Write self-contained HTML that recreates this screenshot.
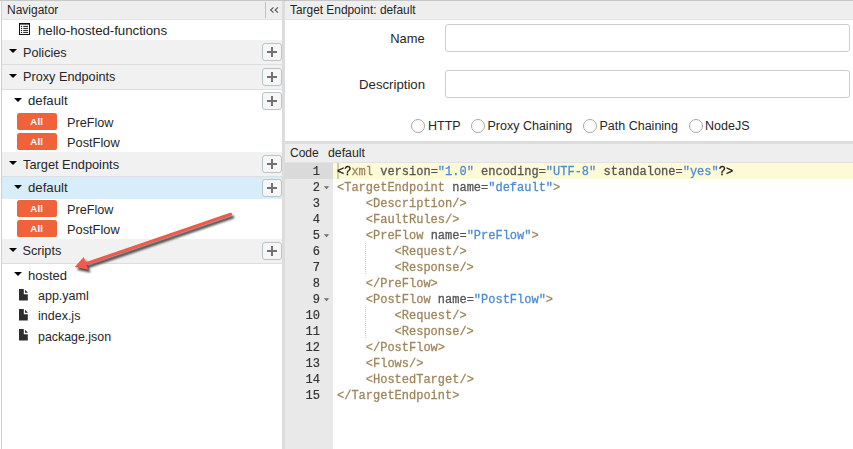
<!DOCTYPE html>
<html><head><meta charset="utf-8">
<style>
*{margin:0;padding:0;box-sizing:border-box}
html,body{width:853px;height:449px;overflow:hidden;background:#fff}
body{position:relative;font-family:"Liberation Sans",sans-serif;color:#222}
.a{position:absolute}
.t{position:absolute;white-space:nowrap;line-height:1}
.row{position:absolute;left:2px;width:280px;height:25px;background:#f1f1f1;border-bottom:1px solid #dedede}
.plus{position:absolute;left:262px;width:19.5px;height:17.6px;border:1px solid #b7c4ca;border-radius:3px;background:#f6f6f6}
.plus:before{content:"";position:absolute;left:4px;top:7px;width:10px;height:1.7px;background:#727272}
.plus:after{content:"";position:absolute;left:8px;top:3px;width:1.7px;height:10px;background:#727272}
.tri{position:absolute;width:0;height:0;border-left:4px solid transparent;border-right:4px solid transparent;border-top:4.2px solid #000}
.badge{position:absolute;left:17px;width:40px;height:17px;background:#f0633a;border-radius:2.6px;color:#fff;font-weight:bold;font-size:9.6px;line-height:18px;text-align:center;letter-spacing:0.2px;padding-right:0.6px}
.code{will-change:transform;-webkit-text-stroke:0.28px currentColor;font-family:"Liberation Mono",monospace;font-size:12px;line-height:16px;color:#111}
.code div{white-space:pre;height:16px}
.ln{position:absolute;left:285px;width:35px;text-align:right;font-family:"Liberation Mono",monospace;font-size:12px;color:#333;line-height:16px;top:1px;will-change:transform;-webkit-text-stroke:0.2px currentColor}
.tg{color:#9f855b}
.at{color:#555}
.st{color:#4a8bd6}
.rad{position:absolute;top:119px;width:14px;height:14px;border:1px solid #a8a8a8;border-radius:50%;background:#fff}
.inp{position:absolute;left:445px;width:405px;height:28px;border:1px solid #cdcdcd;border-radius:3px;background:#fff}
.fold{position:absolute;left:323.6px;width:0;height:0;border-left:2.9px solid transparent;border-right:2.9px solid transparent;border-top:3.2px solid #6a6a6a}
.guide{position:absolute;left:365px;width:1px;height:32px;background:repeating-linear-gradient(to bottom,#c8c8c8 0 1px,transparent 1px 2px)}
</style></head><body>

<div class="a" style="left:0;top:0;width:853px;height:1px;background:#c6c6c6"></div>
<div class="a" style="left:1px;top:1px;width:1px;height:448px;background:#cfcfcf"></div>
<div class="a" style="left:2px;top:1px;width:280px;height:19px;background:#eeeeee;border-bottom:1px solid #e2e2e2"></div>
<div class="a" style="left:265px;top:2px;width:1px;height:16px;background:#b8c5ca"></div>
<svg class="a" style="left:268px;top:5px" width="12" height="10" viewBox="0 0 12 10"><path d="M5.5 2.4 L2.6 5 L5.5 7.6 M10 2.4 L7.1 5 L10 7.6" fill="none" stroke="#555" stroke-width="1.1"/></svg>
<svg class="a" style="left:19px;top:23px" width="11" height="12" viewBox="0 0 11 12">
<rect x="0.5" y="0.7" width="10" height="10.8" fill="#fff" stroke="#111" stroke-width="1"/>
<rect x="0" y="0" width="11" height="1.5" fill="#111"/>
<g fill="#111"><circle cx="2.5" cy="3.4" r="0.65"/><circle cx="2.5" cy="5.4" r="0.65"/><circle cx="2.5" cy="7.4" r="0.65"/><circle cx="2.5" cy="9.4" r="0.65"/></g>
<g stroke="#111" stroke-width="0.95" stroke-linecap="round"><path d="M4.6 3.4H8.6M4.6 5.4H8.6M4.6 7.4H8.6M4.6 9.4H8.6"/></g>
</svg>
<div class="row" style="top:40px"></div><div class="tri" style="left:9px;top:49px"></div>
<div class="row" style="top:65px"></div><div class="tri" style="left:9px;top:74px"></div>
<div class="row" style="top:152px"></div><div class="tri" style="left:9px;top:161px"></div>
<div class="row" style="top:239px"></div><div class="tri" style="left:9px;top:248px"></div>
<div class="a" style="left:2px;top:177px;width:280px;height:22px;background:#d7edf9"></div>
<div class="tri" style="left:14px;top:98px"></div>
<div class="tri" style="left:14px;top:185px"></div>
<div class="tri" style="left:14px;top:272px"></div>
<div class="plus" style="top:43px"></div>
<div class="plus" style="top:68px"></div>
<div class="plus" style="top:92px"></div>
<div class="plus" style="top:155px"></div>
<div class="plus" style="top:179px"></div>
<div class="plus" style="top:242px"></div>
<div class="badge" style="top:113px">All</div>
<div class="badge" style="top:133px">All</div>
<div class="badge" style="top:200px">All</div>
<div class="badge" style="top:220px">All</div>
<svg class="a" style="left:19px;top:289px" width="9" height="12" viewBox="0 0 9 12"><path d="M0 0H4.8V5.2H8.8V11.6H0Z" fill="#2e2e2e"/><path d="M6 0.7V3.8H9.1Z" fill="#2a2a2a"/></svg>
<svg class="a" style="left:19px;top:309px" width="9" height="12" viewBox="0 0 9 12"><path d="M0 0H4.8V5.2H8.8V11.6H0Z" fill="#2e2e2e"/><path d="M6 0.7V3.8H9.1Z" fill="#2a2a2a"/></svg>
<svg class="a" style="left:19px;top:329px" width="9" height="12" viewBox="0 0 9 12"><path d="M0 0H4.8V5.2H8.8V11.6H0Z" fill="#2e2e2e"/><path d="M6 0.7V3.8H9.1Z" fill="#2a2a2a"/></svg>
<div class="a" style="left:282px;top:1px;width:3px;height:448px;background:#dcdcdc"></div>
<div class="a" style="left:285px;top:1px;width:568px;height:19px;background:#eeeeee;border-bottom:1px solid #e2e2e2"></div>
<div class="inp" style="top:24px"></div><div class="inp" style="top:70px"></div>
<div class="rad" style="left:411px"></div>
<div class="rad" style="left:471px"></div>
<div class="rad" style="left:583px"></div>
<div class="rad" style="left:689px"></div>
<div class="a" style="left:285px;top:141px;width:568px;height:3px;background:#dcdcdc"></div>
<div class="a" style="left:285px;top:144px;width:568px;height:19px;background:#eeeeee;border-bottom:1px solid #e2e2e2"></div>
<div class="a" style="left:285px;top:163px;width:48px;height:286px;background:#e9e9e9"></div>
<div class="a" style="left:285px;top:163px;width:48px;height:16px;background:#dadada"></div>
<div class="a" style="left:333px;top:163px;width:520px;height:16px;background:#fffad6"></div>
<div class="a" style="left:337px;top:163px;width:2px;height:16px;background:#d2cda6"></div>
<div class="ln" style="top:164px">1</div>
<div class="ln" style="top:180px">2</div>
<div class="ln" style="top:196px">3</div>
<div class="ln" style="top:212px">4</div>
<div class="ln" style="top:228px">5</div>
<div class="ln" style="top:244px">6</div>
<div class="ln" style="top:260px">7</div>
<div class="ln" style="top:276px">8</div>
<div class="ln" style="top:292px">9</div>
<div class="ln" style="top:308px">10</div>
<div class="ln" style="top:324px">11</div>
<div class="ln" style="top:340px">12</div>
<div class="ln" style="top:356px">13</div>
<div class="ln" style="top:372px">14</div>
<div class="ln" style="top:388px">15</div>
<svg class="a" style="left:323px;top:186px" width="7" height="4" viewBox="0 0 7 4"><path d="M0.8 0.2H6.2L3.5 3.3Z" fill="#707070"/></svg>
<svg class="a" style="left:323px;top:234px" width="7" height="4" viewBox="0 0 7 4"><path d="M0.8 0.2H6.2L3.5 3.3Z" fill="#707070"/></svg>
<svg class="a" style="left:323px;top:298px" width="7" height="4" viewBox="0 0 7 4"><path d="M0.8 0.2H6.2L3.5 3.3Z" fill="#707070"/></svg>
<div class="guide" style="top:243px"></div><div class="guide" style="top:307px"></div>
<div class="a code" style="left:337px;top:164px">
<div>&lt;?<span class="tg">xml</span> <span class="at">version=</span><span class="st">"1.0"</span> <span class="at">encoding=</span><span class="st">"UTF-8"</span> <span class="at">standalone=</span><span class="st">"yes"</span>?&gt;</div>
<div><span class="tg">&lt;TargetEndpoint</span> <span class="at">name=</span><span class="st">"default"</span><span class="tg">&gt;</span></div>
<div>    <span class="tg">&lt;Description/&gt;</span></div>
<div>    <span class="tg">&lt;FaultRules/&gt;</span></div>
<div>    <span class="tg">&lt;PreFlow</span> <span class="at">name=</span><span class="st">"PreFlow"</span><span class="tg">&gt;</span></div>
<div>        <span class="tg">&lt;Request/&gt;</span></div>
<div>        <span class="tg">&lt;Response/&gt;</span></div>
<div>    <span class="tg">&lt;/PreFlow&gt;</span></div>
<div>    <span class="tg">&lt;PostFlow</span> <span class="at">name=</span><span class="st">"PostFlow"</span><span class="tg">&gt;</span></div>
<div>        <span class="tg">&lt;Request/&gt;</span></div>
<div>        <span class="tg">&lt;Response/&gt;</span></div>
<div>    <span class="tg">&lt;/PostFlow&gt;</span></div>
<div>    <span class="tg">&lt;Flows/&gt;</span></div>
<div>    <span class="tg">&lt;HostedTarget/&gt;</span></div>
<div><span class="tg">&lt;/TargetEndpoint&gt;</span></div>
</div>
<div class="t" style="left:7px;top:4.14px;font-size:12px;color:#262626;">Navigator</div>
<div class="t" style="left:38px;top:23.54px;font-size:13.3px;color:#262626;letter-spacing:-0.05px">hello-hosted-functions</div>
<div class="t" style="left:23px;top:47.05px;font-size:12.7px;color:#262626;">Policies</div>
<div class="t" style="left:23px;top:70.55px;font-size:12.7px;color:#262626;">Proxy Endpoints</div>
<div class="t" style="left:28px;top:94.23px;font-size:13.2px;color:#262626;">default</div>
<div class="t" style="left:67px;top:116.65px;font-size:12.7px;color:#262626;">PreFlow</div>
<div class="t" style="left:67px;top:136.96px;font-size:12.8px;color:#262626;">PostFlow</div>
<div class="t" style="left:23px;top:158.96px;font-size:12.8px;color:#262626;">Target Endpoints</div>
<div class="t" style="left:28px;top:181.03px;font-size:13.2px;color:#262626;">default</div>
<div class="t" style="left:67px;top:203.65px;font-size:12.7px;color:#262626;">PreFlow</div>
<div class="t" style="left:67px;top:223.96px;font-size:12.8px;color:#262626;">PostFlow</div>
<div class="t" style="left:22.5px;top:244.75px;font-size:12.7px;color:#262626;">Scripts</div>
<div class="t" style="left:28px;top:268.60px;font-size:13px;color:#262626;">hosted</div>
<div class="t" style="left:38px;top:289.62px;font-size:12.5px;color:#262626;">app.yaml</div>
<div class="t" style="left:38px;top:309.92px;font-size:12.5px;color:#262626;">index.js</div>
<div class="t" style="left:38px;top:330.70px;font-size:12.4px;color:#262626;">package.json</div>
<div class="t" style="left:290px;top:5.03px;font-size:11.9px;color:#262626;">Target Endpoint: default</div>
<div class="t" style="left:124.69999999999999px;width:300px;text-align:right;top:32.78px;font-size:12.9px;color:#262626;">Name</div>
<div class="t" style="left:125px;width:300px;text-align:right;top:77.83px;font-size:13.2px;color:#262626;">Description</div>
<div class="t" style="left:428px;top:119.62px;font-size:12.5px;color:#262626;">HTTP</div>
<div class="t" style="left:487.5px;top:119.62px;font-size:12.5px;color:#262626;">Proxy Chaining</div>
<div class="t" style="left:599.5px;top:119.62px;font-size:12.5px;color:#262626;">Path Chaining</div>
<div class="t" style="left:705px;top:119.62px;font-size:12.5px;color:#262626;">NodeJS</div>
<div class="t" style="left:290px;top:146.54px;font-size:12px;color:#262626;">Code</div>
<div class="t" style="left:328px;top:146.79px;font-size:12.3px;color:#262626;">default</div>
<svg class="a" style="left:0;top:0" width="283" height="449" viewBox="0 0 283 449">
<defs><filter id="sh" x="-20%" y="-50%" width="140%" height="200%"><feGaussianBlur stdDeviation="1.2"/></filter></defs>
<g transform="translate(2.1,2.8)" filter="url(#sh)" opacity="0.9">
<line x1="230.5" y1="214.3" x2="86" y2="263.8" stroke="#333" stroke-width="3.2" stroke-linecap="round"/>
<polygon points="74.7,267 83.7,257 88.4,269.7" fill="#333"/>
</g>
<line x1="230.5" y1="214.3" x2="86" y2="263.8" stroke="#ef5a4b" stroke-width="3.2" stroke-linecap="round"/>
<polygon points="74.7,267 83.7,257 88.4,269.7" fill="#ef5a4b"/>
</svg>
</body></html>
